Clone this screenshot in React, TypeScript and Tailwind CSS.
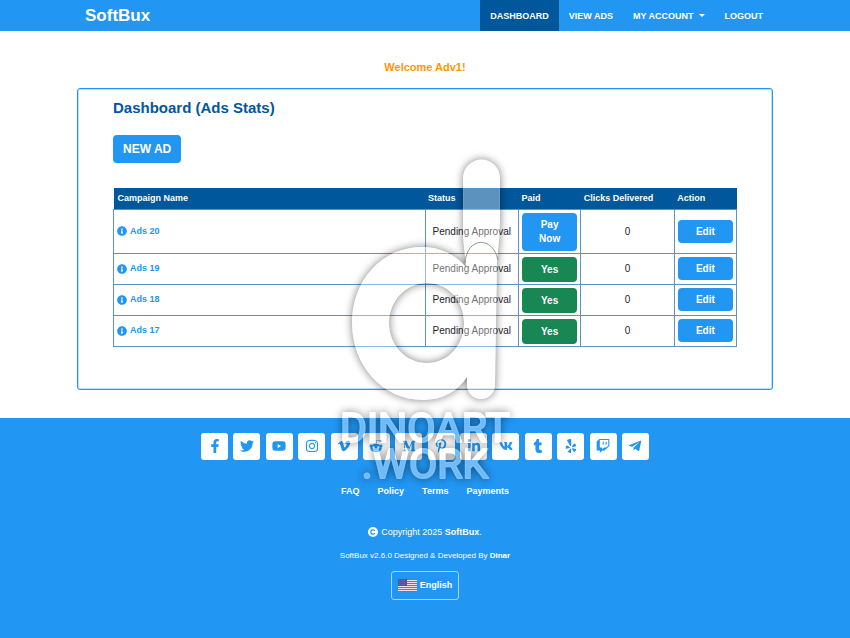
import {
  FaFacebookF,
  FaTwitter,
  FaYoutube,
  FaInstagram,
  FaVimeoV,
  FaRedditAlien,
  FaMediumM,
  FaPinterestP,
  FaLinkedinIn,
  FaVk,
  FaTumblr,
  FaYelp,
  FaTwitch,
  FaTelegramPlane,
  FaInfoCircle,
} from "react-icons/fa";

type Ad = {
  id: number;
  name: string;
  status: string;
  paid: boolean;
  clicks: number;
};

const ads: Ad[] = [
  { id: 20, name: "Ads 20", status: "Pending Approval", paid: false, clicks: 0 },
  { id: 19, name: "Ads 19", status: "Pending Approval", paid: true, clicks: 0 },
  { id: 18, name: "Ads 18", status: "Pending Approval", paid: true, clicks: 0 },
  { id: 17, name: "Ads 17", status: "Pending Approval", paid: true, clicks: 0 },
];

const socials = [
  { label: "Facebook", icon: FaFacebookF },
  { label: "Twitter", icon: FaTwitter },
  { label: "YouTube", icon: FaYoutube },
  { label: "Instagram", icon: FaInstagram },
  { label: "Vimeo", icon: FaVimeoV },
  { label: "Reddit", icon: FaRedditAlien },
  { label: "Medium", icon: FaMediumM },
  { label: "Pinterest", icon: FaPinterestP },
  { label: "LinkedIn", icon: FaLinkedinIn },
  { label: "VK", icon: FaVk },
  { label: "Tumblr", icon: FaTumblr },
  { label: "Yelp", icon: FaYelp },
  { label: "Twitch", icon: FaTwitch },
  { label: "Telegram", icon: FaTelegramPlane },
];

const footerLinks = ["FAQ", "Policy", "Terms", "Payments"];

function UsFlag() {
  return (
    <svg viewBox="0 0 19 13" className="h-[13px] w-[19px]" aria-hidden="true">
      <rect width="19" height="13" fill="#f3dfe6" />
      {[0, 2, 4, 6, 8, 10, 12].map((y) => (
        <rect key={y} y={y} width="19" height="1" fill="#dc4a5a" />
      ))}
      <rect width="9" height="7" fill="#4a55a8" />
      {[1, 3, 5].map((y) => (
        <path key={y} d={`M1 ${y + 0.5}h7`} stroke="#7f8acb" strokeWidth="0.7" strokeDasharray="0.7 1.1" />
      ))}
    </svg>
  );
}

function Watermark() {
  return (
    <svg
      viewBox="0 0 200 350"
      className="pointer-events-none absolute top-[145px] left-1/2 h-[350px] w-[200px] -translate-x-1/2"
      aria-hidden="true"
    >
      <defs>
        {/* shadow is kept outside the shape so the fill stays see-through */}
        <filter id="halo" x="-20%" y="-20%" width="140%" height="140%" colorInterpolationFilters="sRGB">
          <feColorMatrix
            in="SourceAlpha"
            type="matrix"
            values="0 0 0 0 0  0 0 0 0 0  0 0 0 0 0  0 0 0 0.5 0"
          />
          <feGaussianBlur stdDeviation="4" result="blur" />
          <feComposite in="blur" in2="SourceAlpha" operator="out" result="shadow" />
          <feMorphology in="SourceGraphic" operator="erode" radius="1" result="inner" />
          <feComposite in="SourceGraphic" in2="inner" operator="out" result="rim" />
          <feComponentTransfer in="rim" result="edge">
            <feFuncA type="linear" slope="0.1" />
          </feComponentTransfer>
          <feComponentTransfer in="SourceGraphic" result="fill">
            <feFuncA type="linear" slope="0.36" />
          </feComponentTransfer>
          <feMerge>
            <feMergeNode in="shadow" />
            <feMergeNode in="fill" />
            <feMergeNode in="edge" />
          </feMerge>
        </filter>
      </defs>
      <path
        d="M138 33A18.5 18.5 0 0 1 175 33L175 70C175 92 173 105 172 117L170 240A14 14 0 0 1 142 240L142 232C133 246 118 255 98 255C57 255 27 220 27 178C27 135 57 102 97 102C115 102 130 109 141 122L138 92ZM102 138C81 138 64 156 64 178C64 200 81 218 102 218C123 218 139 200 139 178C139 156 123 138 102 138Z"
        fill="#fff"
        fillRule="evenodd"
        filter="url(#halo)"
      />
      <path d="M140 118C142 91 168 91 173 115" fill="none" stroke="#777" strokeOpacity="0.8" />
      <g
        filter="url(#halo)"
        fill="#fff"
        stroke="#fff"
        strokeWidth="2"
        strokeLinejoin="round"
        textAnchor="middle"
        className="font-[Roboto,sans-serif] text-[41px]"
      >
        <text x="100" y="297">DINOART</text>
        <text x="100" y="333">.WORK</text>
      </g>
    </svg>
  );
}

function Navbar() {
  return (
    <header className="bg-[#2196f3] text-white">
      <div className="mx-auto flex h-[31px] max-w-[696px] items-center justify-between">
        <a href="#" className="pl-2 text-[17px] font-bold">
          SoftBux
        </a>

        <nav className="flex h-full items-center text-[9px] leading-[16px] font-bold">
          <a href="#" className="flex h-full items-center bg-[#01579b] px-[10px]">
            DASHBOARD
          </a>
          <a href="#" className="px-[10px]">
            VIEW ADS
          </a>
          <button type="button" className="flex items-center gap-[5px] px-[10px]">
            MY ACCOUNT
            <span className="border-x-[3px] border-t-[3px] border-x-transparent border-t-white" />
          </button>
          <a href="#" className="px-[10px]">
            LOGOUT
          </a>
        </nav>
      </div>
    </header>
  );
}

function AdsTable() {
  return (
    <table className="mt-[25px] w-full table-fixed border-collapse text-[10px]">
      <thead>
        <tr className="h-[21px] bg-[#01579b] text-left text-[9px] text-white">
          <th className="w-[50%] px-[4px]">Campaign Name</th>
          <th className="w-[15%] px-[3px]">Status</th>
          <th className="w-[10%] px-[3px]">Paid</th>
          <th className="w-[15%] px-[3px]">Clicks Delivered</th>
          <th className="w-[10%] px-[3px]">Action</th>
        </tr>
      </thead>
      <tbody>
        {ads.map((ad) => (
          <tr key={ad.id}>
            <td className="border border-[#5c93c4] px-[3px]">
              <a href="#" className="flex items-center gap-[3px] text-[9px] font-bold text-[#2196f3]">
                <FaInfoCircle className="size-[10px]" />
                {ad.name}
              </a>
            </td>
            <td className="border border-[#5c93c4] text-center text-[#212529]">{ad.status}</td>
            <td className="border border-[#5c93c4] px-[3px] pt-[3px] pb-[2px]">
              {ad.paid ? (
                <button
                  type="button"
                  className="block h-[25px] w-full rounded bg-[#198754] font-bold text-white"
                >
                  Yes
                </button>
              ) : (
                <button
                  type="button"
                  className="block w-full rounded bg-[#2196f3] px-3 py-[5px] leading-[14px] font-bold text-white"
                >
                  Pay Now
                </button>
              )}
            </td>
            <td className="border border-[#5c93c4] text-center text-[#212529]">{ad.clicks}</td>
            <td className="border border-[#5c93c4] px-[3px]">
              <button
                type="button"
                className="block h-[23px] w-full rounded bg-[#2196f3] font-bold text-white"
              >
                Edit
              </button>
            </td>
          </tr>
        ))}
      </tbody>
    </table>
  );
}

function Footer() {
  return (
    <footer className="flex flex-1 flex-col items-center bg-[#2196f3] pt-[15px] pb-8 text-[9px] text-white">
      <div className="flex w-full max-w-[448px] justify-between">
        {socials.map(({ label, icon: Icon }) => (
          <a
            key={label}
            href="#"
            aria-label={label}
            className="flex size-[27px] items-center justify-center rounded-[3px] bg-white text-[14px] text-[#2196f3]"
          >
            <Icon />
          </a>
        ))}
      </div>

      <nav className="mt-6 flex gap-[18px] font-bold">
        {footerLinks.map((link) => (
          <a key={link} href="#">
            {link}
          </a>
        ))}
      </nav>

      <p className="mt-[26px] flex items-center gap-[3px]">
        <svg viewBox="0 0 10 10" className="size-[10px]" aria-hidden="true">
          <circle cx="5" cy="5" r="5" fill="#fff" />
          <path d="M6.9 3.8A2.2 2.2 0 1 0 6.9 6.2" fill="none" stroke="#2196f3" strokeWidth="1.3" />
        </svg>
        <span>
          Copyright 2025 <a href="#" className="font-bold">SoftBux</a>.
        </span>
      </p>

      <p className="mt-2 text-[8px]">
        SoftBux v2.6.0 Designed &amp; Developed By <a href="#" className="font-bold">Dinar</a>
      </p>

      <button
        type="button"
        className="mt-2 flex h-[29px] items-center gap-[3px] rounded-[3px] border border-[#a6d5fa] px-[6px] font-bold"
      >
        <UsFlag />
        English
      </button>
    </footer>
  );
}

export default function App() {
  return (
    <div className="relative flex min-h-screen flex-col bg-white font-['Liberation_Sans',Arial,sans-serif] leading-[15px]">
      <Navbar />

      <main className="mx-auto w-full max-w-[696px] pb-7">
        <p className="mt-[29px] text-center text-[11px] font-bold text-[#ff9800]">Welcome Adv1!</p>

        <section className="mt-[13px] rounded-[3px] border border-[#2196f3] px-[35px] pt-[9px] pb-[42px] shadow-[inset_0_0_0_1px_#bfe0fb]">
          <h1 className="text-[15px] leading-[19px] font-bold text-[#01579b]">
            Dashboard (Ads Stats)
          </h1>

          <button
            type="button"
            className="mt-[18px] block h-7 rounded bg-[#2196f3] px-[10px] text-[12px] font-bold text-white"
          >
            NEW AD
          </button>

          <AdsTable />
        </section>
      </main>

      <Footer />
      <Watermark />
    </div>
  );
}
